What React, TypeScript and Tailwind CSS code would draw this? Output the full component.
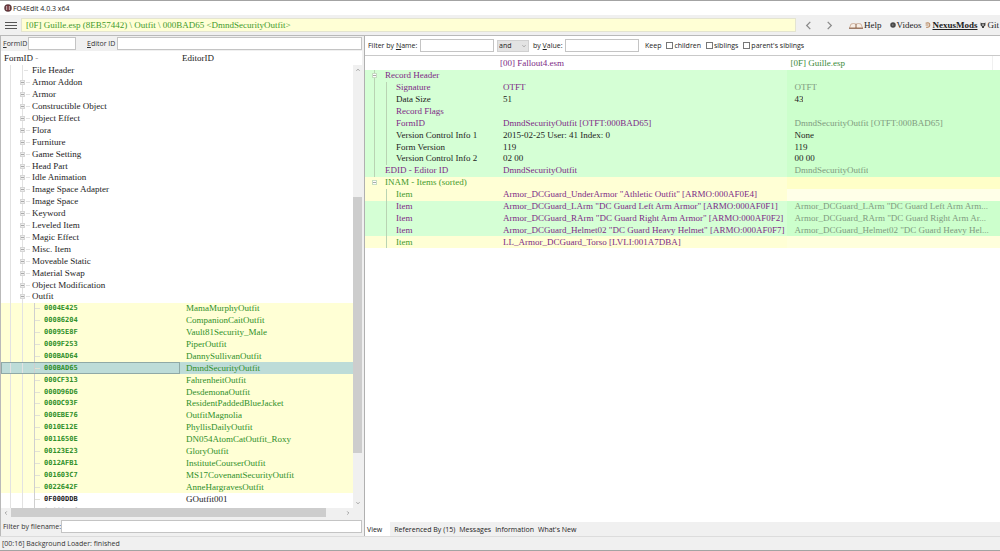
import { useState } from "react";

const groups = [
  "File Header",
  "Armor Addon",
  "Armor",
  "Constructible Object",
  "Object Effect",
  "Flora",
  "Furniture",
  "Game Setting",
  "Head Part",
  "Idle Animation",
  "Image Space Adapter",
  "Image Space",
  "Keyword",
  "Leveled Item",
  "Magic Effect",
  "Misc. Item",
  "Moveable Static",
  "Material Swap",
  "Object Modification",
  "Outfit",
];

const outfits: [string, string][] = [
  ["0004E425", "MamaMurphyOutfit"],
  ["00086204", "CompanionCaitOutfit"],
  ["00095E8F", "Vault81Security_Male"],
  ["0009F253", "PiperOutfit"],
  ["000BAD64", "DannySullivanOutfit"],
  ["000BAD65", "DmndSecurityOutfit"],
  ["000CF313", "FahrenheitOutfit"],
  ["000D96D6", "DesdemonaOutfit"],
  ["000DC93F", "ResidentPaddedBlueJacket"],
  ["000EBE76", "OutfitMagnolia"],
  ["0010E12E", "PhyllisDailyOutfit"],
  ["0011650E", "DN054AtomCatOutfit_Roxy"],
  ["00123E23", "GloryOutfit"],
  ["0012AFB1", "InstituteCourserOutfit"],
  ["001603C7", "MS17CovenantSecurityOutfit"],
  ["0022642F", "AnneHargravesOutfit"],
  ["0F000DDB", "GOutfit001"],
  ["0F000DDC", "GOutfit002"],
];

type Tone = "purple" | "black" | "green" | "gray";
const tones: Record<Tone, string> = {
  purple: "text-[#7d2a86]",
  black: "text-[#1c1c1c]",
  green: "text-[#3f9a2c]",
  gray: "text-[#7f9a7f]",
};

type Field = {
  label: string;
  depth: 0 | 1;
  tone: Tone;
  a?: string;
  b?: string;
  aTone?: Tone;
  bTone?: Tone;
  fill: "same" | "group" | "added" | "last";
};

const fills = {
  same: ["bg-[#d5ffd5]", "bg-[#ccffcc]"],
  group: ["bg-[#ffffd5]", "bg-[#ffffc8]"],
  added: ["bg-[#ffffd5]", "bg-[#ffffe8]"],
  last: ["bg-[#ffffd5]", "bg-[#ffffdc]"],
};

const fields: Field[] = [
  { label: "Record Header", depth: 0, tone: "purple", fill: "same" },
  { label: "Signature", depth: 1, tone: "purple", a: "OTFT", b: "OTFT", aTone: "purple", bTone: "gray", fill: "same" },
  { label: "Data Size", depth: 1, tone: "black", a: "51", b: "43", aTone: "black", bTone: "black", fill: "same" },
  { label: "Record Flags", depth: 1, tone: "purple", fill: "same" },
  { label: "FormID", depth: 1, tone: "purple", a: "DmndSecurityOutfit [OTFT:000BAD65]", b: "DmndSecurityOutfit [OTFT:000BAD65]", aTone: "purple", bTone: "gray", fill: "same" },
  { label: "Version Control Info 1", depth: 1, tone: "black", a: "2015-02-25 User: 41 Index: 0", b: "None", aTone: "black", bTone: "black", fill: "same" },
  { label: "Form Version", depth: 1, tone: "black", a: "119", b: "119", aTone: "black", bTone: "black", fill: "same" },
  { label: "Version Control Info 2", depth: 1, tone: "black", a: "02 00", b: "00 00", aTone: "black", bTone: "black", fill: "same" },
  { label: "EDID - Editor ID", depth: 0, tone: "purple", a: "DmndSecurityOutfit", b: "DmndSecurityOutfit", aTone: "purple", bTone: "gray", fill: "same" },
  { label: "INAM - Items (sorted)", depth: 0, tone: "green", fill: "group" },
  { label: "Item", depth: 1, tone: "green", a: 'Armor_DCGuard_UnderArmor "Athletic Outfit" [ARMO:000AF0E4]', aTone: "purple", fill: "added" },
  { label: "Item", depth: 1, tone: "purple", a: 'Armor_DCGuard_LArm "DC Guard Left Arm Armor" [ARMO:000AF0F1]', b: 'Armor_DCGuard_LArm "DC Guard Left Arm Arm...', aTone: "purple", bTone: "gray", fill: "same" },
  { label: "Item", depth: 1, tone: "purple", a: 'Armor_DCGuard_RArm "DC Guard Right Arm Armor" [ARMO:000AF0F2]', b: 'Armor_DCGuard_RArm "DC Guard Right Arm Ar...', aTone: "purple", bTone: "gray", fill: "same" },
  { label: "Item", depth: 1, tone: "purple", a: 'Armor_DCGuard_Helmet02 "DC Guard Heavy Helmet" [ARMO:000AF0F7]', b: 'Armor_DCGuard_Helmet02 "DC Guard Heavy Hel...', aTone: "purple", bTone: "gray", fill: "same" },
  { label: "Item", depth: 1, tone: "green", a: "LL_Armor_DCGuard_Torso [LVLI:001A7DBA]", aTone: "purple", fill: "last" },
];

const serif = "font-['Liberation_Serif',serif] text-[9px]";
const box = "h-[13px] min-w-0 border border-[#c4c4c4] bg-white px-1 outline-none";

function Chevron({ d, className }: { d: string; className: string }) {
  return (
    <svg viewBox="0 0 10 10" className={className} fill="none" stroke="currentColor" strokeWidth="1.4" aria-hidden="true">
      <path d={d} />
    </svg>
  );
}

const LEFT = "M7 1L3 5L7 9";
const RIGHT = "M3 1L7 5L3 9";
const UP = "M1 7L5 3L9 7";
const DOWN = "M1 3L5 7L9 3";

function TitleBar() {
  return (
    <header className="flex h-[14px] items-center gap-px bg-white pl-1 text-[#222]">
      <svg viewBox="0 0 16 16" className="size-2" aria-hidden="true">
        <circle cx="8" cy="8" r="7.5" fill="#5d3a3e" />
        <path d="M4 4h3v8H4zM9 4h3v8H9z" fill="#b99a9e" />
        <path d="M7 2h2v12H7z" fill="#7d2830" />
      </svg>
      <h1>FO4Edit 4.0.3 x64</h1>
    </header>
  );
}

function Toolbar() {
  return (
    <div className={`flex h-[21px] items-center border-b border-[#b9b9b9] bg-[#f0f0f0] ${serif}`}>
      <button aria-label="Menu" className="flex w-[21px] shrink-0 flex-col items-center gap-[2px] px-1">
        <span className="h-px w-3 bg-[#555]" />
        <span className="h-px w-3 bg-[#555]" />
        <span className="h-px w-3 bg-[#555]" />
      </button>
      <div className="flex h-[14px] min-w-0 flex-1 items-center border border-[#e4e4d0] bg-[#ffffd5] pl-1 text-[#3f9a2c]">
        <span className="truncate">[0F] Guille.esp (8EB57442) \ Outfit \ 000BAD65 &lt;DmndSecurityOutfit&gt;</span>
      </div>
      <div className="flex w-[204px] shrink-0 items-center whitespace-nowrap text-[#222]">
        <button aria-label="Back" className="ml-2 text-[#8a8a8a]">
          <Chevron d={LEFT} className="size-[9px]" />
        </button>
        <button aria-label="Forward" className="ml-3 text-[#8a8a8a]">
          <Chevron d={RIGHT} className="size-[9px]" />
        </button>
        <a href="#help" className="ml-[15px] flex items-center gap-px">
          <svg viewBox="0 0 28 14" className="h-[7px] w-[14px]" aria-hidden="true">
            <path d="M1 12L4 4Q9 2 14 4Q19 2 24 4L27 12Z" fill="#f7eee6" stroke="#b98d70" strokeWidth="1.2" />
            <path d="M14 4V12M0 12.500H28" stroke="#7e5238" strokeWidth="1.8" />
          </svg>
          Help
        </a>
        <a href="#videos" className="ml-2 flex items-center gap-px">
          <svg viewBox="0 0 10 10" className="size-[6px]" aria-hidden="true">
            <circle cx="5" cy="5" r="4.6" fill="#4a4a4a" />
            <path d="M4 3.500L6.500 5L4 6.500Z" fill="#999" />
          </svg>
          Videos
        </a>
        <a href="#nexus" className="ml-1 flex items-center gap-px font-bold">
          <svg viewBox="0 0 10 10" className="size-[6px]" fill="none" stroke="#b98a62" strokeWidth="1.8" aria-hidden="true">
            <path d="M1 2Q8 0 8 5Q8 9 2 9M1 5H6" />
          </svg>
          <span className="underline">NexusMods</span>
        </a>
        <a href="#github" className="ml-[3px] flex items-center gap-px">
          <svg viewBox="0 0 10 10" className="size-[6px]" aria-hidden="true">
            <path d="M1 1L3 2H7L9 1V5Q9 7 6.500 7.500V10H3.500V7.500Q1 7 1 5Z" fill="#333" />
            <path d="M3 4H7V6H3Z" fill="#ddd" />
          </svg>
          Git
        </a>
      </div>
    </div>
  );
}

function TreeGuides({ index }: { index: number }) {
  const isGroup = index < groups.length;
  return (
    <span className="flex h-full shrink-0 items-stretch" aria-hidden="true">
      <span className="w-[10px] border-r border-[#e2e2e2]" />
      <span className="w-3 border-r border-[#e2e2e2]" />
      {isGroup ? (
        <span className="flex w-[9px] items-center">
          {index > 0 && (
            <span className="-ml-[3px] flex size-[5px] shrink-0 items-center justify-center border border-[#d6d6d6] bg-[#eee]">
              <span className="h-px w-[3px] bg-[#aaa]" />
            </span>
          )}
          <span className="ml-px h-px w-1 bg-[#e2e2e2]" />
        </span>
      ) : (
        <>
          <span className="w-3 border-r border-[#cfcfcf]" />
          <span className="mr-1 h-px w-[5px] self-center bg-[#e2e2d4]" />
        </>
      )}
    </span>
  );
}

function RecordTree() {
  const [selected, setSelected] = useState("000BAD65");
  return (
    <div className="flex min-h-0 flex-1 bg-white">
      <div className="min-w-0 flex-1 overflow-hidden">
        <table className={`block whitespace-nowrap ${serif}`}>
          <thead className="block">
            <tr className="grid h-[14px] grid-cols-[179px_1fr] items-center text-[#222]">
              <th className="pl-[3px] text-left font-normal">FormID <span className="text-[#999]">-</span></th>
              <th className="pl-[2px] text-left font-normal">EditorID</th>
            </tr>
          </thead>
          <tbody className="grid h-[452px] auto-rows-fr text-[#1c1c1c]">
            {groups.map((name, i) => (
              <tr key={name} className="flex min-h-0 items-center">
                <td className="flex h-full items-center">
                  <TreeGuides index={i} />
                  {name}
                </td>
              </tr>
            ))}
            {outfits.map(([id, name], i) => {
              const isSelected = id === selected;
              const own = id.startsWith("0F");
              return (
                <tr
                  key={id}
                  onClick={() => setSelected(id)}
                  className={`grid min-h-0 grid-cols-[179px_1fr] ${isSelected ? "bg-[#bddcd8]" : own ? "bg-white" : "bg-[#ffffd5]"} ${own ? "" : "text-[#2f8f2a]"}`}
                >
                  <td
                    className={`flex min-h-0 items-center font-['DejaVu_Sans_Mono',monospace] text-[7px] font-bold ${isSelected ? "outline outline-1 -outline-offset-1 outline-[#8fa9a6]" : ""}`}
                  >
                    <TreeGuides index={groups.length + i} />
                    {id}
                  </td>
                  <td className="flex min-h-0 items-center pl-[6px]">{name}</td>
                </tr>
              );
            })}
          </tbody>
        </table>
      </div>
      <div className="mt-[14px] flex w-[9px] shrink-0 flex-col items-center bg-[#f0f0f0] text-[#666]">
        <Chevron d={UP} className="my-[3px] size-1" />
        <div className="flex-[122]" />
        <div className="w-full flex-[256] bg-[#cdcdcd]" />
        <div className="flex-[45]" />
        <Chevron d={DOWN} className="my-[3px] size-1" />
      </div>
    </div>
  );
}

function Navigator() {
  return (
    <section className="flex w-[362px] shrink-0 flex-col border-l border-[#b9b9b9] bg-[#f0f0f0]">
      <div className="flex h-[15px] items-center pl-[2px] text-[#333]">
        <label htmlFor="formid" className="min-w-[25px] whitespace-nowrap"><u>F</u>ormID</label>
        <input id="formid" className={`${box} w-12`} />
        <label htmlFor="editorid" className="ml-[11px] min-w-[30px] whitespace-nowrap"><u>E</u>ditor ID</label>
        <input id="editorid" className={`${box} flex-1`} />
      </div>
      <RecordTree />
      <div className="flex h-[9px] shrink-0 items-center bg-[#f0f0f0] pr-[9px] text-[#666]">
        <Chevron d={LEFT} className="mx-[3px] size-1" />
        <div className="h-full flex-[318] bg-[#cdcdcd]" />
        <div className="flex-[17]" />
        <Chevron d={RIGHT} className="mx-[3px] size-1" />
      </div>
      <div className="flex h-[19px] shrink-0 items-center pl-[2px] text-[#333]">
        <label htmlFor="filename" className="min-w-[58px] whitespace-nowrap">Filter by filename:</label>
        <input id="filename" className={`${box} flex-1`} />
      </div>
    </section>
  );
}

function KeepOption({ id, label }: { id: string; label: string }) {
  return (
    <label htmlFor={id} className="flex items-center gap-px">
      <input id={id} type="checkbox" className="size-[7px] appearance-none border border-[#777] bg-white checked:bg-[#555]" />
      {label}
    </label>
  );
}

function FilterBar() {
  return (
    <div className="flex h-[20px] shrink-0 items-center whitespace-nowrap border-b border-[#c9c9c9] pl-[3px] text-[#222]">
      <label htmlFor="by-name" className="min-w-[52px]">Filter by <u>N</u>ame:</label>
      <input id="by-name" className={`${box} w-[74px]`} />
      <div className="relative ml-[3px]">
        <select aria-label="Operator" className="h-3 w-8 appearance-none border border-[#d0d0d0] bg-[#e3e3e3] pl-px leading-none outline-none">
          <option>and</option>
          <option>or</option>
        </select>
        <Chevron d={DOWN} className="pointer-events-none absolute right-[3px] top-1 size-1 text-[#777]" />
      </div>
      <label htmlFor="by-value" className="ml-1 min-w-8">by <u>V</u>alue:</label>
      <input id="by-value" className={`${box} w-[74px]`} />
      <fieldset className="ml-[6px] flex items-center gap-[5px]">
        <span>Keep</span>
        <KeepOption id="children" label="children" />
        <KeepOption id="siblings" label="siblings" />
        <KeepOption id="parents" label="parent's siblings" />
      </fieldset>
    </div>
  );
}

const columns = "grid grid-cols-[135px_minmax(0,288fr)_minmax(0,205fr)_8px]";

function RecordView() {
  const lastBranch = fields.map((f) => f.depth).lastIndexOf(0);
  return (
    <table className={`block whitespace-nowrap ${serif}`}>
      <thead className="block">
        <tr className={`${columns} h-[14px] items-center`}>
          <th aria-label="Field" />
          <th className="text-left font-normal text-[#7d2a86]">[00] Fallout4.esm</th>
          <th className="pl-[3px] text-left font-normal text-[#3b8a3b]">[0F] Guille.esp</th>
          <th aria-hidden="true" className="h-full border-l border-[#f0f0f0]" />
        </tr>
      </thead>
      <tbody className="grid h-[178px] auto-rows-fr">
        {fields.map((f, i) => {
          const [fillA, fillB] = fills[f.fill];
          return (
            <tr key={i} className={`${columns} min-h-0`}>
              <td className={`flex min-h-0 items-center ${fillA} ${tones[f.tone]}`}>
                <span
                  className={`h-full w-[10px] shrink-0 border-r ${i < lastBranch ? "border-[#b9d3b3]" : "border-transparent"}`}
                  aria-hidden="true"
                />
                {f.depth === 0 ? (
                  <span className="flex w-[10px] shrink-0 items-center" aria-hidden="true">
                    {f.label !== "EDID - Editor ID" && (
                      <span className="-ml-[3px] flex size-[5px] items-center justify-center border border-[#c6dcc2] bg-white">
                        <span className="h-px w-[3px] bg-[#aaa]" />
                      </span>
                    )}
                  </span>
                ) : (
                  <span className="mr-[9px] h-full w-3 shrink-0 border-r border-[#b9d3b3]" aria-hidden="true" />
                )}
                {f.label}
              </td>
              <td className={`flex min-h-0 items-center pl-[3px] ${fillA} ${tones[f.aTone ?? "black"]}`}>{f.a}</td>
              <td className={`flex min-h-0 items-center pl-[7px] ${fillB} ${tones[f.bTone ?? "black"]}`}>
                <span className="truncate">{f.b}</span>
              </td>
              <td className={fillB} aria-hidden="true" />
            </tr>
          );
        })}
      </tbody>
    </table>
  );
}

function BottomTabs() {
  const tabs = ["View", "Referenced By (15)", "Messages", "Information", "What's New"];
  const [active, setActive] = useState("View");
  return (
    <div role="tablist" className="flex h-[14px] shrink-0 items-stretch bg-[#f0f0f0] text-[#222]">
      {tabs.map((tab) => (
        <button
          key={tab}
          role="tab"
          aria-selected={tab === active}
          onClick={() => setActive(tab)}
          className={`${tab === "View" ? "mr-[2px] pl-[2px] pr-2" : "px-[2px]"} ${tab === active ? "bg-white" : ""}`}
        >
          {tab}
        </button>
      ))}
    </div>
  );
}

export default function App() {
  return (
    <div className="flex h-screen flex-col overflow-hidden border-y border-[#a3a3a3] bg-[#f0f0f0] font-['Open_Sans',sans-serif] text-[7px] leading-none">
      <TitleBar />
      <Toolbar />
      <main className="flex min-h-0 flex-1">
        <Navigator />
        <section className="ml-[2px] flex min-w-0 flex-1 flex-col border-l border-[#b0b0b0] bg-white">
          <FilterBar />
          <div className="min-h-0 flex-1 overflow-hidden">
            <RecordView />
          </div>
          <BottomTabs />
        </section>
      </main>
      <footer className="flex h-[14px] shrink-0 items-center border-t border-[#dcdcdc] pl-[2px] text-[#333]">
        [00:16] Background Loader: finished
      </footer>
    </div>
  );
}
